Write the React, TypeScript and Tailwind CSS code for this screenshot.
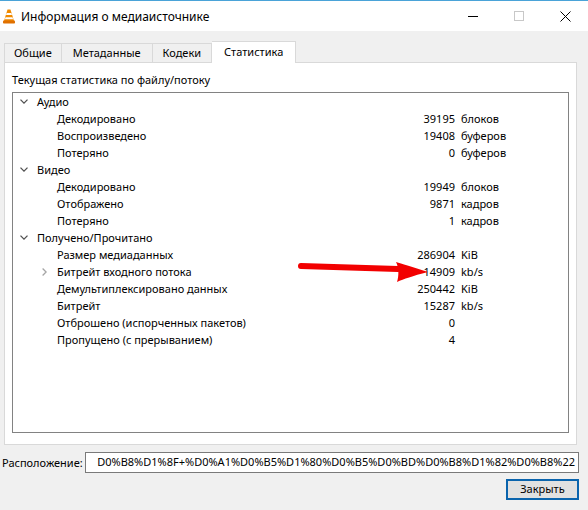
import React from "react";

type Row = { label: string; value?: string; unit?: string; level: 0 | 1; expand?: "open" | "closed" };

const rows: Row[] = [
  { label: "Аудио", level: 0, expand: "open" },
  { label: "Декодировано", value: "39195", unit: "блоков", level: 1 },
  { label: "Воспроизведено", value: "19408", unit: "буферов", level: 1 },
  { label: "Потеряно", value: "0", unit: "буферов", level: 1 },
  { label: "Видео", level: 0, expand: "open" },
  { label: "Декодировано", value: "19949", unit: "блоков", level: 1 },
  { label: "Отображено", value: "9871", unit: "кадров", level: 1 },
  { label: "Потеряно", value: "1", unit: "кадров", level: 1 },
  { label: "Получено/Прочитано", level: 0, expand: "open" },
  { label: "Размер медиаданных", value: "286904", unit: "KiB", level: 1 },
  { label: "Битрейт входного потока", value: "14909", unit: "kb/s", level: 1, expand: "closed" },
  { label: "Демультиплексировано данных", value: "250442", unit: "KiB", level: 1 },
  { label: "Битрейт", value: "15287", unit: "kb/s", level: 1 },
  { label: "Отброшено (испорченных пакетов)", value: "0", unit: "", level: 1 },
  { label: "Пропущено (с прерыванием)", value: "4", unit: "", level: 1 },
];

function ChevronDown() {
  return (
    <svg width="8" height="5" viewBox="0 0 8 5" className="block">
      <path d="M0.5 0.6 L4 4.1 L7.5 0.6" fill="none" stroke="#505050" strokeWidth="1.3" />
    </svg>
  );
}
function ChevronRight() {
  return (
    <svg width="5" height="8" viewBox="0 0 5 8" className="block">
      <path d="M0.6 0.5 L4.1 4 L0.6 7.5" fill="none" stroke="#a6a6a6" strokeWidth="1.3" />
    </svg>
  );
}

function VlcIcon() {
  return (
    <svg width="12" height="15" viewBox="0 0 12 15" className="block">
      <path d="M4.5 0.5 L7.5 0.5 L11 12 L1 12 Z" fill="#f08a00" />
      <path d="M3.6 4 L8.4 4 L9 6 L3 6 Z" fill="#ffffff" />
      <path d="M2.5 8.3 L9.5 8.3 L10.1 10.3 L1.9 10.3 Z" fill="#ffffff" />
      <rect x="0" y="11.5" width="12" height="3" rx="0.8" fill="#e07000" />
    </svg>
  );
}

export default function App() {
  const font = { fontFamily: '"Noto Sans", "Open Sans", sans-serif' };
  return (
    <div
      className="w-[588px] h-[510px] bg-[#f0f0f0] flex flex-col text-[11px] text-black overflow-hidden relative"
      style={font}
    >
      {/* title bar */}
      <div className="h-[31px] bg-white border-t border-[#4aa3d8] flex items-center shrink-0">
        <div className="pl-[3px] pr-[6px]">
          <VlcIcon />
        </div>
        <div className="text-[12px] leading-none pt-[1px]">Информация о медиаисточнике</div>
        <div className="ml-auto flex items-center h-full">
          <div className="w-[46px] h-full flex items-center justify-center">
            <div className="w-[10px] h-[1px] bg-black" />
          </div>
          <div className="w-[46px] h-full flex items-center justify-center">
            <div className="w-[10px] h-[10px] border border-[#c8c8c8]" />
          </div>
          <div className="w-[46px] h-full flex items-center justify-center">
            <svg width="11" height="11" viewBox="0 0 11 11">
              <path d="M0.5 0.5 L10.5 10.5 M10.5 0.5 L0.5 10.5" stroke="#000" strokeWidth="1" />
            </svg>
          </div>
        </div>
      </div>

      {/* body */}
      <div className="flex-1 flex flex-col px-[4px] pt-[9px]">
        {/* tabs */}
        <div className="flex items-end h-[22px] relative z-10">
          <div className="h-[19px] px-[9px] pt-[1px] flex items-center border border-[#d9d9d9] border-b-0 bg-[#f0f0f0]">Общие</div>
          <div className="h-[19px] px-[11px] pt-[1px] flex items-center border border-[#d9d9d9] border-b-0 border-l-0 bg-[#f0f0f0]">Метаданные</div>
          <div className="h-[19px] px-[10px] pt-[1px] flex items-center border border-[#d9d9d9] border-b-0 border-l-0 bg-[#f0f0f0]">Кодеки</div>
          <div className="h-[22px] px-[12px] flex items-center border border-[#d9d9d9] border-b-0 border-l-0 bg-white -mb-[1px] pb-[1px]">Статистика</div>
        </div>
        {/* panel */}
        <div className="w-[573px] h-[383px] bg-white border border-[#d9d9d9] flex flex-col px-[7px] pt-[8px] pb-[11px]">
          <div className="leading-[17px] mb-[4px]">Текущая статистика по файлу/потоку</div>
          <div className="flex-1 border border-[#828282] flex flex-col">
            {rows.map((r, i) => (
              <div key={i} className="h-[17px] flex items-center leading-none">
                <div className="w-[24px] shrink-0 flex justify-start pl-[7px]">
                  {r.level === 0 && r.expand === "open" ? <ChevronDown /> : null}
                </div>
                {r.level === 1 ? (
                  <div className="w-[20px] shrink-0 flex justify-start pl-[5px]">
                    {r.expand === "closed" ? <ChevronRight /> : null}
                  </div>
                ) : null}
                <div className={r.level === 0 ? "w-[418px] shrink-0" : "w-[318px] shrink-0"}>{r.label}</div>
                {r.level === 1 ? (
                  <>
                    <div className="w-[80px] text-right shrink-0">{r.value}</div>
                    <div className="pl-[6px]">{r.unit}</div>
                  </>
                ) : null}
              </div>
            ))}
          </div>
        </div>

        {/* location */}
        <div className="flex items-center mt-[7px] -ml-[2px]">
          <div className="w-[83px] shrink-0 pt-[1px]">Расположение:</div>
          <div className="w-[494px] h-[21px] bg-white border border-[#7a7a7a] overflow-hidden flex justify-end items-center pr-[3px]">
            <span className="whitespace-nowrap">D0%B8%D1%8F+%D0%A1%D0%B5%D1%80%D0%B5%D0%BD%D0%B8%D1%82%D0%B8%22</span>
          </div>
        </div>

        {/* close button */}
        <div className="flex justify-end mt-[6px] pr-[5px]">
          <div className="w-[73px] h-[21px] bg-[#e1e1e1] border-2 border-[#0a64ad] flex items-center justify-center">
            Закрыть
          </div>
        </div>
      </div>

      {/* red arrow annotation */}
      <svg className="absolute left-0 top-0 pointer-events-none" width="588" height="510" viewBox="0 0 588 510">
        <path d="M301 266 L398 269" stroke="#f20000" strokeWidth="6" strokeLinecap="round" fill="none" />
        <path d="M396 262 C402 264 410 266 428 272 C412 276 404 279 397 282 C399 276 399 268 396 262 Z" fill="#f20000" />
      </svg>
    </div>
  );
}
